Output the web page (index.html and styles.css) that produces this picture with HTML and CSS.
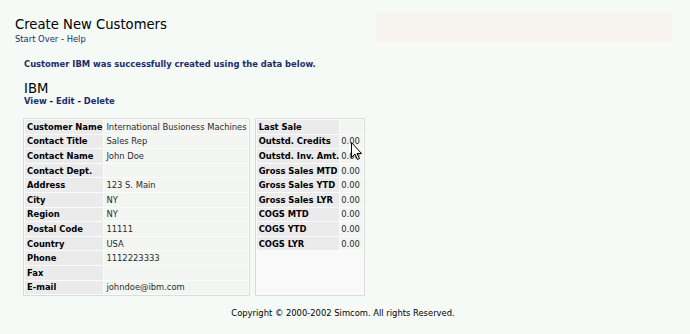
FILE: index.html
```html
<!DOCTYPE html>
<html>
<head>
<meta charset="utf-8">
<link rel="stylesheet" href="styles.css">
</head>
<body>
<div class="header">
  <div class="title-block">
    <h1 class="title">Create New Customers</h1>
    <div class="nav"><a href="#">Start Over</a> - <a href="#">Help</a></div>
  </div>
  <div class="banner"></div>
</div>
<div class="content">
  <p class="message">Customer IBM was successfully created using the data below.</p>
  <h2 class="cust-name">IBM</h2>
  <div class="actions"><a href="#">View</a> - <a href="#">Edit</a> - <a href="#">Delete</a></div>
  <div class="panels">
    <table class="grid left">
      <tr><th>Customer Name</th><td>International Busioness Machines</td></tr>
      <tr><th>Contact Title</th><td>Sales Rep</td></tr>
      <tr><th>Contact Name</th><td>John Doe</td></tr>
      <tr><th>Contact Dept.</th><td></td></tr>
      <tr><th>Address</th><td>123 S. Main</td></tr>
      <tr><th>City</th><td>NY</td></tr>
      <tr><th>Region</th><td>NY</td></tr>
      <tr><th>Postal Code</th><td>11111</td></tr>
      <tr><th>Country</th><td>USA</td></tr>
      <tr><th>Phone</th><td>1112223333</td></tr>
      <tr><th>Fax</th><td></td></tr>
      <tr><th>E-mail</th><td>johndoe@ibm.com</td></tr>
    </table>
    <div class="right-panel">
      <table class="grid right">
        <tr><th>Last Sale</th><td></td></tr>
        <tr><th>Outstd. Credits</th><td>0.00</td></tr>
        <tr><th>Outstd. Inv. Amt.</th><td>0.00</td></tr>
        <tr><th>Gross Sales MTD</th><td>0.00</td></tr>
        <tr><th>Gross Sales YTD</th><td>0.00</td></tr>
        <tr><th>Gross Sales LYR</th><td>0.00</td></tr>
        <tr><th>COGS MTD</th><td>0.00</td></tr>
        <tr><th>COGS YTD</th><td>0.00</td></tr>
        <tr><th>COGS LYR</th><td>0.00</td></tr>
      </table>
    </div>
  </div>
  <p class="footer">Copyright © 2000-2002 Simcom. All rights Reserved.</p>
</div>
<svg class="cursor" width="12" height="19" viewBox="0 0 12 19"><path d="M0.5 0.5 L0.5 15.5 L4 12 L6.5 17.5 L8.5 16.5 L6 11.5 L10.5 11.5 Z" fill="#fff" stroke="#000" stroke-width="1"/></svg>
</body>
</html>
```
FILE: styles.css
```css
html, body {
  margin: 0;
  padding: 0;
}
body {
  background: #f5faf7;
  font-family: "DejaVu Sans", Verdana, sans-serif;
  font-size: 8.4px;
  color: #000;
  position: relative;
  height: 334px;
  overflow: hidden;
}
a {
  color: #1c2c6c;
  text-decoration: none;
}
.header {
  display: flex;
  justify-content: space-between;
  align-items: flex-start;
  padding-top: 12px;
}
.title-block {
  padding-left: 15px;
  padding-top: 5px;
}
.title {
  font-size: 13.2px;
  font-weight: normal;
  margin: 0;
  line-height: 15px;
}
.nav {
  line-height: 10px;
  margin-top: 2px;
}
.banner {
  width: 296px;
  height: 30px;
  background: #f7f3ee;
  border-bottom: 2px solid #faf9f5;
  margin-right: 18px;
}
.content {
  padding-left: 23px;
}
.message {
  margin: 15px 0 0 1px;
  font-weight: bold;
  color: #1c2c6c;
  line-height: 10px;
}
.cust-name {
  margin: 13px 0 0 1px;
  font-size: 13.2px;
  font-weight: normal;
  line-height: 14px;
}
.actions {
  font-weight: bold;
  line-height: 10px;
  margin-left: 1px;
}
.panels {
  display: flex;
  align-items: stretch;
  gap: 5px;
  margin-top: 12px;
}
.grid {
  border-collapse: separate;
  border-spacing: 1px;
  background: #fbfbfb;
}
.left {
  border: 1px solid #dcdcdc;
}
.right-panel {
  border: 1px solid #dcdcdc;
  background: #f8f9f8;
}
.grid th, .grid td {
  height: 13.6px;
  padding: 0 1px 0 2px;
  line-height: 10px;
  white-space: nowrap;
  text-align: left;
}
.grid th {
  background: #ebebeb;
  font-weight: bold;
}
.grid td {
  background: #f3f5f3;
  color: #2a2a2a;
}
.right th {
  padding-right: 0;
}
.right td {
  padding: 0 3px 0 1px;
}
.footer {
  margin: 12px 0 0 0;
  text-align: center;
  width: 640px;
  line-height: 10px;
}
.cursor {
  position: absolute;
  left: 351px;
  top: 142px;
}
```
